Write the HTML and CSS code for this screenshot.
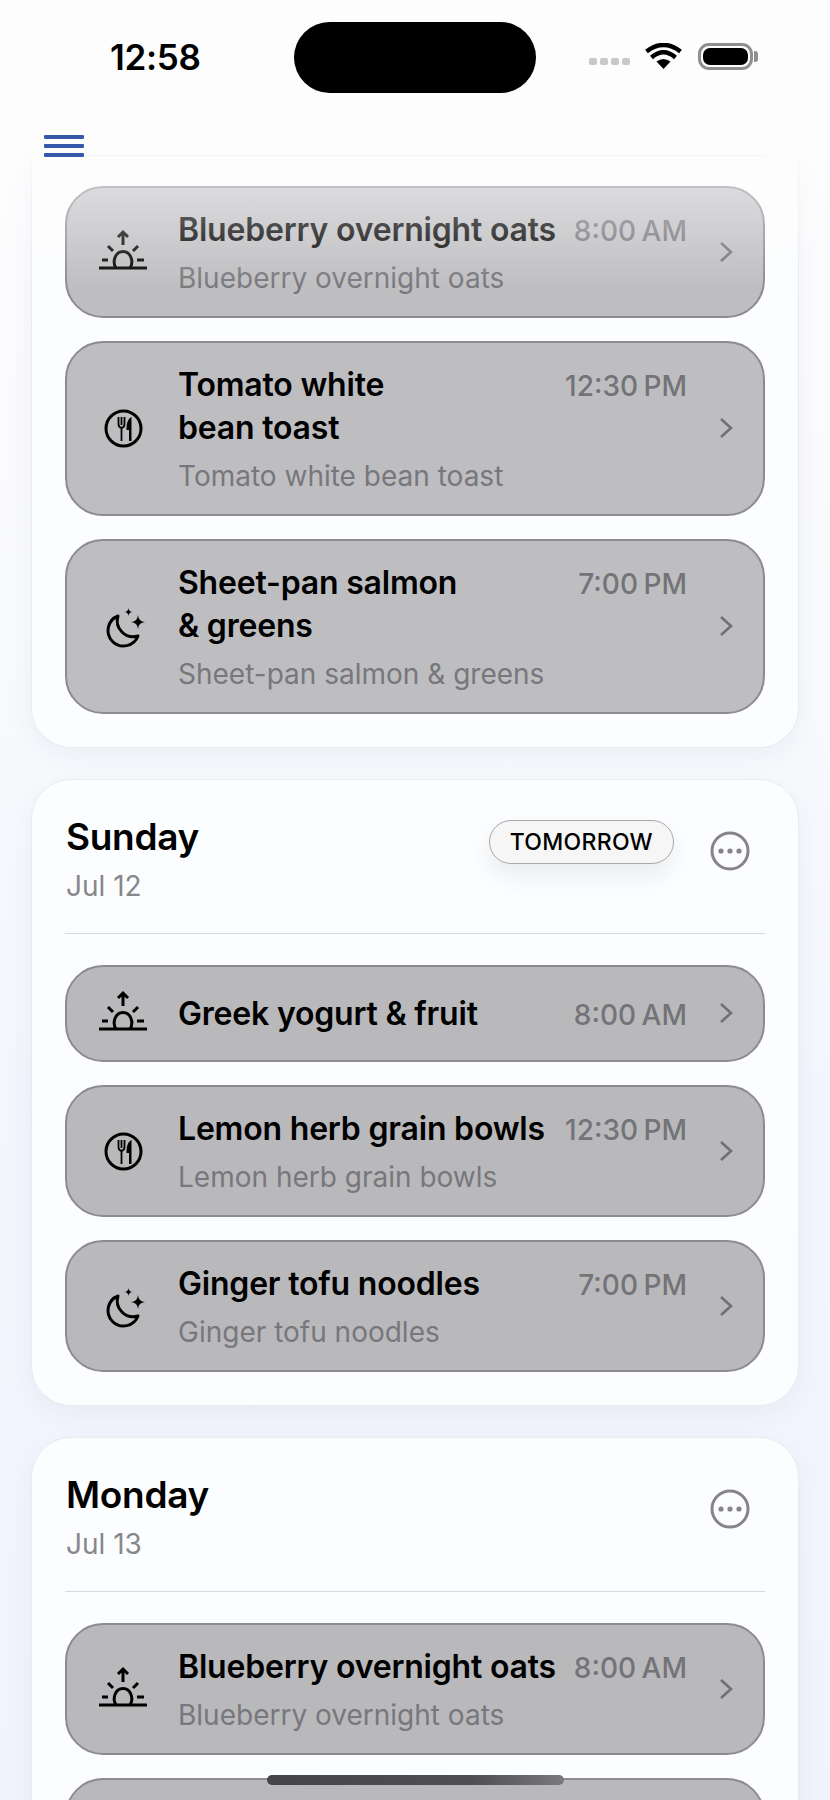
FILE: index.html
```html
<!DOCTYPE html>
<html lang="en">
<head>
  <meta charset="UTF-8">
  <meta name="viewport" content="width=device-width, initial-scale=1">
  <title>Meal Plan</title>
  <link rel="stylesheet" href="styles.css">
</head>
<body>

<svg class="icon-defs" width="0" height="0" aria-hidden="true">
  <symbol id="icon-sunrise" viewBox="0 0 50 50">
    <g fill="none" stroke="currentColor" stroke-width="3">
      <path d="M26 18V5M21 10l5-5 5 5"/>
      <path d="M11 19l5 5M41 19l-5 5M5 33h6M40 33h7M2 41h48"/>
      <path d="M19 41c-4-6-1-16.500 7-16.500s11 10.500 7 16.500"/>
    </g>
  </symbol>
  <symbol id="icon-meal" viewBox="0 0 50 50">
    <circle cx="26.500" cy="25.500" r="17.500" fill="none" stroke="currentColor" stroke-width="3"/>
    <path d="M21.500 14v7q0 3.500 3 4V38M24.500 14v8M27.500 14v7q0 3.500-3 4" fill="none" stroke="currentColor" stroke-width="1.800"/>
    <path d="M34.500 14c-3.500 1.500-5 6-5 13h2.500v11h2.500z" fill="currentColor"/>
  </symbol>
  <symbol id="icon-moon" viewBox="0 0 50 50">
    <path d="M21 15A15.500 15.500 0 1 0 41 35A16 16 0 0 1 21 15Z" fill="none" stroke="currentColor" stroke-width="3" stroke-linejoin="round"/>
    <path d="M41 14q.500 6.500 7 7q-6.500 .500-7 7q-.500-6.500-7-7q6.500-.500 7-7Z" fill="currentColor"/>
    <path d="M31.500 7q.300 3.700 4 4q-3.700 .300-4 4q-.300-3.700-4-4q3.700-.300 4-4Z" fill="currentColor"/>
  </symbol>
  <symbol id="icon-chevron" viewBox="0 0 16 24">
    <path d="M3 3l10 9-10 9" fill="none" stroke="currentColor" stroke-width="2.600"/>
  </symbol>
  <symbol id="icon-more" viewBox="0 0 40 40">
    <circle cx="20" cy="20" r="18" fill="none" stroke="currentColor" stroke-width="3"/>
    <circle cx="11" cy="20" r="2.600" fill="currentColor"/>
    <circle cx="20" cy="20" r="2.600" fill="currentColor"/>
    <circle cx="29" cy="20" r="2.600" fill="currentColor"/>
  </symbol>
</svg>

<div class="top-fade"></div>

<header class="top-bar">
  <div class="status-bar">
    <span class="clock">12:58</span>
    <div class="island"></div>
    <div class="signal">
      <div class="cell-dots"><i></i><i></i><i></i><i></i></div>
      <svg class="wifi" width="37" height="26" viewBox="0 0 37 26">
        <path d="M18.500 26L11.500 18.500Q18.500 13.500 25.500 18.500Z" fill="#000"/>
        <path d="M6.500 14.500Q18.500 4 30.500 14.500" fill="none" stroke="#000" stroke-width="4.500"/>
        <path d="M1.500 8.500Q18.500 -4.500 35.500 8.500" fill="none" stroke="#000" stroke-width="4.500"/>
      </svg>
      <div class="battery"><div class="battery-fill"></div></div>
    </div>
  </div>
  <div class="nav-row">
    <button class="menu-button" aria-label="Menu"><span></span><span></span><span></span></button>
  </div>
</header>

<main class="day-list">

  <section class="day-card day-card-cut">
    <a class="meal-row">
      <svg class="meal-icon"><use href="#icon-sunrise"/></svg>
      <div class="meal-text">
        <div class="meal-head"><span class="meal-name">Blueberry overnight oats</span><span class="meal-time">8:00 AM</span></div>
        <div class="meal-sub">Blueberry overnight oats</div>
      </div>
      <svg class="meal-chevron"><use href="#icon-chevron"/></svg>
    </a>
    <a class="meal-row">
      <svg class="meal-icon"><use href="#icon-meal"/></svg>
      <div class="meal-text">
        <div class="meal-head"><span class="meal-name">Tomato white<br>bean toast</span><span class="meal-time">12:30 PM</span></div>
        <div class="meal-sub">Tomato white bean toast</div>
      </div>
      <svg class="meal-chevron"><use href="#icon-chevron"/></svg>
    </a>
    <a class="meal-row">
      <svg class="meal-icon"><use href="#icon-moon"/></svg>
      <div class="meal-text">
        <div class="meal-head"><span class="meal-name">Sheet-pan salmon<br>&amp; greens</span><span class="meal-time">7:00 PM</span></div>
        <div class="meal-sub">Sheet-pan salmon &amp; greens</div>
      </div>
      <svg class="meal-chevron"><use href="#icon-chevron"/></svg>
    </a>
  </section>

  <section class="day-card">
    <div class="day-head">
      <div class="day-title">
        <h2>Sunday</h2>
        <p>Jul 12</p>
      </div>
      <span class="day-badge">TOMORROW</span>
      <svg class="day-more"><use href="#icon-more"/></svg>
    </div>
    <a class="meal-row">
      <svg class="meal-icon"><use href="#icon-sunrise"/></svg>
      <div class="meal-text">
        <div class="meal-head"><span class="meal-name">Greek yogurt &amp; fruit</span><span class="meal-time">8:00 AM</span></div>
      </div>
      <svg class="meal-chevron"><use href="#icon-chevron"/></svg>
    </a>
    <a class="meal-row">
      <svg class="meal-icon"><use href="#icon-meal"/></svg>
      <div class="meal-text">
        <div class="meal-head"><span class="meal-name">Lemon herb grain bowls</span><span class="meal-time">12:30 PM</span></div>
        <div class="meal-sub">Lemon herb grain bowls</div>
      </div>
      <svg class="meal-chevron"><use href="#icon-chevron"/></svg>
    </a>
    <a class="meal-row">
      <svg class="meal-icon"><use href="#icon-moon"/></svg>
      <div class="meal-text">
        <div class="meal-head"><span class="meal-name">Ginger tofu noodles</span><span class="meal-time">7:00 PM</span></div>
        <div class="meal-sub">Ginger tofu noodles</div>
      </div>
      <svg class="meal-chevron"><use href="#icon-chevron"/></svg>
    </a>
  </section>

  <section class="day-card">
    <div class="day-head">
      <div class="day-title">
        <h2>Monday</h2>
        <p>Jul 13</p>
      </div>
      <svg class="day-more"><use href="#icon-more"/></svg>
    </div>
    <a class="meal-row">
      <svg class="meal-icon"><use href="#icon-sunrise"/></svg>
      <div class="meal-text">
        <div class="meal-head"><span class="meal-name">Blueberry overnight oats</span><span class="meal-time">8:00 AM</span></div>
        <div class="meal-sub">Blueberry overnight oats</div>
      </div>
      <svg class="meal-chevron"><use href="#icon-chevron"/></svg>
    </a>
    <a class="meal-row meal-row-empty"></a>
  </section>

</main>

<div class="home-bar"></div>

</body>
</html>
```

FILE: styles.css
```css
html, body {
  height: 1800px;
  overflow: hidden;
}

body {
  margin: 0;
  font-family: Inter, "Noto Sans", sans-serif;
  color: #000;
  background: linear-gradient(#fdfdfe 0, #f9fafd 35%, #f3f6fd 60%, #f1f4fc 100%);
}

.icon-defs {
  position: absolute;
}

/* fades the first card out under the status bar */
.top-fade {
  position: absolute;
  top: 0;
  left: 0;
  right: 0;
  height: 290px;
  background: linear-gradient(rgba(253, 253, 254, 1) 0, rgba(253, 253, 254, 0.96) 45%, rgba(253, 253, 254, 0.48) 64%, rgba(253, 253, 254, 0) 100%);
  z-index: 2;
}

.top-bar {
  position: relative;
  z-index: 3;
  height: 155px;
}

.status-bar {
  display: flex;
  align-items: center;
  padding: 22px 0 0 110px;
}

.clock {
  width: 184px;
  margin-top: -2px;
  font-size: 35px;
  font-weight: 600;
  letter-spacing: -0.3px;
}

.island {
  width: 242px;
  height: 71px;
  border-radius: 36px;
  background: #000;
}

.signal {
  display: flex;
  align-items: center;
  margin-left: 53px;
  margin-top: -3px;
}

.cell-dots {
  display: flex;
  gap: 3px;
  margin-top: 11px;
}

.cell-dots i {
  width: 8px;
  height: 7px;
  border-radius: 2px;
  background: #c9c9cb;
}

.wifi {
  margin-left: 15px;
}

.battery {
  position: relative;
  box-sizing: border-box;
  width: 55px;
  height: 27px;
  margin-left: 16px;
  padding: 2px;
  border: 3px solid #8e8e90;
  border-radius: 11px;
}

.battery::after {
  content: "";
  position: absolute;
  top: 5px;
  right: -8px;
  width: 4px;
  height: 11px;
  border-radius: 0 3px 3px 0;
  background: #8e8e90;
}

.battery-fill {
  height: 100%;
  border-radius: 7px;
  background: #000;
}

.nav-row {
  height: 20px;
  margin: 0 65px 0 44px;
  padding-top: 42px;
  border-bottom: 1px solid #f3f4f6;
}

.menu-button {
  display: flex;
  flex-direction: column;
  gap: 5.500px;
  width: 40px;
  padding: 0;
  border: none;
  background: none;
}

.menu-button span {
  height: 3.500px;
  border-radius: 1px;
  background: #3558ab;
}

.day-list {
  display: flex;
  flex-direction: column;
  gap: 31px;
  padding: 0 31px;
}

.day-card {
  display: flex;
  flex-direction: column;
  gap: 23px;
  padding: 0 33px 33px;
  border: 1px solid #e9ebf1;
  border-radius: 40px;
  background: #fcfdfe;
  box-shadow: 0 8px 26px rgba(60, 70, 110, 0.06);
}

.day-card-cut {
  padding-top: 31px;
  border-top: none;
  border-radius: 0 0 40px 40px;
}

.day-card-cut .meal-row {
  background: #bebec1;
}

.day-head {
  display: flex;
  align-items: flex-start;
  height: 154px;
  box-sizing: border-box;
  margin-bottom: 8px;
  padding-top: 35px;
  border-bottom: 1px solid #d9d9dc;
}

.day-title {
  flex: 1;
  padding-left: 1px;
}

.day-title h2 {
  margin: 0;
  font-size: 37px;
  font-weight: 600;
  line-height: 44px;
  letter-spacing: -0.3px;
}

.day-title p {
  margin: 10px 0 0;
  font-size: 28px;
  line-height: 34px;
  color: #87878c;
}

.day-badge {
  box-sizing: border-box;
  height: 44px;
  margin-top: 5px;
  padding: 0 20px;
  border: 1px solid #a9a9ad;
  border-radius: 22px;
  background: #f6f6f7;
  box-shadow: 0 12px 24px rgba(0, 0, 0, 0.07);
  font-size: 23px;
  font-weight: 500;
  line-height: 42px;
  letter-spacing: 0.3px;
}

.day-more {
  width: 40px;
  height: 40px;
  margin: 16px 15px 0 36px;
  color: #858589;
}

.meal-row {
  display: flex;
  align-items: center;
  box-sizing: border-box;
  min-height: 97px;
  padding: 20px 29px 21px 30px;
  border: 2px solid #8c8c8f;
  border-radius: 38px;
  background: #b9b9bc;
}

.meal-row-empty {
  height: 132px;
  flex: none;
}

.meal-icon {
  flex: none;
  width: 50px;
  height: 50px;
}

.meal-text {
  flex: 1;
  margin-left: 31px;
}

.meal-head {
  display: flex;
  justify-content: space-between;
  align-items: baseline;
}

.meal-name {
  font-size: 32px;
  font-weight: 600;
  line-height: 43px;
  letter-spacing: -0.2px;
}

.meal-time {
  font-size: 28px;
  font-weight: 500;
  color: #737378;
  word-spacing: -2px;
}

.meal-sub {
  margin-top: 8px;
  margin-bottom: -2px;
  font-size: 28px;
  line-height: 38px;
  color: #77777c;
}

.meal-chevron {
  flex: none;
  width: 16px;
  height: 24px;
  margin-left: 31px;
  color: #707075;
}

.home-bar {
  position: absolute;
  top: 1775px;
  left: 267px;
  width: 297px;
  height: 10px;
  border-radius: 5px;
  background: linear-gradient(90deg, #454548 0, #505053 70%, #7a7a7e 100%);
  z-index: 4;
}
```
